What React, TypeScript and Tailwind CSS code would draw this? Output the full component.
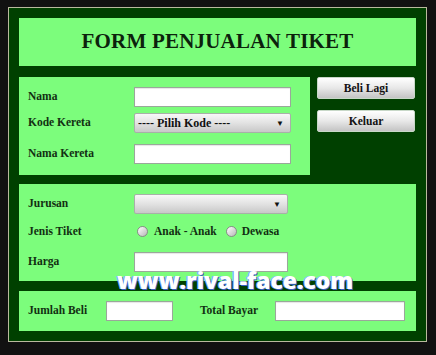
import React from "react";

const serif = { fontFamily: '"Liberation Serif", "DejaVu Serif", serif' };

function TextBox({ w }: { w: string }) {
  return <div className={`h-[20px] ${w} bg-white border border-[#9aa89a] shadow-[inset_0_1px_1px_rgba(0,0,0,0.1)]`} />;
}

function Select({ w, label }: { w: string; label?: string }) {
  return (
    <div className={`h-[20px] ${w} border border-[#a8b0a8] rounded-[2px] bg-gradient-to-b from-[#f8f8f8] via-[#e2e2e2] to-[#c8c8c8] flex items-center justify-between pl-[3px] pr-[6px]`}>
      <span className="text-[12px] font-bold text-[#111]" style={serif}>{label ?? ""}</span>
      <span className="text-[8px] text-[#111] leading-none">▼</span>
    </div>
  );
}

function Label({ children, w }: { children: React.ReactNode; w?: string }) {
  return (
    <div className={`text-[11.5px] font-bold text-[#123012] ${w ?? "w-[106px]"}`} style={serif}>
      {children}
    </div>
  );
}

function Radio() {
  return (
    <div className="w-[11px] h-[11px] rounded-full border border-[#8a8a8a] bg-gradient-to-br from-[#ffffff] to-[#b8b8b8]" />
  );
}

function Btn({ children }: { children: React.ReactNode }) {
  return (
    <div className="h-[22px] w-full border border-[#c8d8c8] rounded-[2px] bg-gradient-to-b from-[#ffffff] via-[#e8e8e8] to-[#c4c4c4] flex items-start justify-center pt-[2px]">
      <span className="text-[11.5px] font-bold text-[#111]" style={serif}>{children}</span>
    </div>
  );
}

export default function App() {
  return (
    <div className="relative w-[436px] h-[355px] bg-[#111111] pl-[8px] pt-[7px]">
      <div className="w-[419px] h-[335px] border border-[#b9b99e] bg-[#004000] p-[10px] flex flex-col">
        <div className="h-[48px] bg-[#7cfd7c] flex items-center justify-center">
          <span className="text-[21px] font-bold text-[#0c220c] tracking-[0.2px]" style={serif}>
            FORM PENJUALAN TIKET
          </span>
        </div>
        <div className="mt-[11px] flex gap-[7px]">
          <div className="w-[291px] h-[98px] bg-[#7cfd7c] pl-[9px] pt-[10px] flex flex-col">
            <div className="flex items-center h-[20px]">
              <Label>Nama</Label>
              <TextBox w="w-[157px]" />
            </div>
            <div className="flex items-center h-[20px] mt-[6px]">
              <Label>Kode Kereta</Label>
              <Select w="w-[157px]" label="---- Pilih Kode ----" />
            </div>
            <div className="flex items-center h-[20px] mt-[11px]">
              <Label>Nama Kereta</Label>
              <TextBox w="w-[157px]" />
            </div>
          </div>
          <div className="w-[98px] flex flex-col gap-[11px]">
            <Btn>Beli Lagi</Btn>
            <Btn>Keluar</Btn>
          </div>
        </div>
        <div className="mt-[9px] h-[98px] bg-[#7cfd7c] pl-[9px] pt-[10px] flex flex-col">
          <div className="flex items-center h-[20px]">
            <Label>Jurusan</Label>
            <Select w="w-[154px]" />
          </div>
          <div className="flex items-center h-[20px] mt-[8px]">
            <Label>Jenis Tiket</Label>
            <div className="flex items-center ml-[3px]">
              <Radio />
              <span className="ml-[6px] text-[11.5px] font-bold text-[#123012]" style={serif}>Anak - Anak</span>
              <div className="ml-[9px]"><Radio /></div>
              <span className="ml-[5px] text-[11.5px] font-bold text-[#123012]" style={serif}>Dewasa</span>
            </div>
          </div>
          <div className="flex items-center h-[20px] mt-[10px]">
            <Label>Harga</Label>
            <TextBox w="w-[154px]" />
          </div>
        </div>
        <div className="mt-[10px] h-[40px] bg-[#7cfd7c] pl-[9px] flex items-center">
          <Label w="w-[78px]">Jumlah Beli</Label>
          <TextBox w="w-[67px]" />
          <div className="ml-[27px]"><Label w="w-[75px]">Total Bayar</Label></div>
          <TextBox w="w-[130px]" />
        </div>
      </div>
      <div
        className="absolute left-[117px] top-[269px] text-[23px] font-extrabold text-white leading-none tracking-[-0.1px]"
        style={{ fontFamily: '"Open Sans", "DejaVu Sans", sans-serif', textShadow: "1px 1px 0 #3a5fbf, -1px 0 0 #7fa0ff" }}
      >
        www.rival-face.com
      </div>
    </div>
  );
}
